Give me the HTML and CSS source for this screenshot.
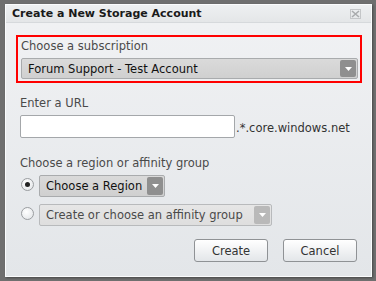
FILE: index.html
```html
<!DOCTYPE html>
<html lang="en">
<head>
  <meta charset="UTF-8" />
  <title>Create a New Storage Account</title>
  <link rel="stylesheet" href="styles.css">
</head>
<body>
  <div class="dialog">
    <div class="titlebar">
      <span class="title">Create a New Storage Account</span>
      <svg class="close" width="11" height="10" viewBox="0 0 11 10">
        <rect x="0.5" y="0.5" width="10" height="9" fill="none" stroke="#c4c6c8"/>
        <path d="M2 2 L9 8 M9 2 L2 8" stroke="#a9abad" stroke-width="1.6"/>
      </svg>
    </div>

    <div class="content">
      <section class="highlight">
        <div class="label">Choose a subscription</div>
        <div class="select wide">
          <span class="select-text">Forum Support - Test Account</span>
          <span class="arrow"><svg width="7" height="4" viewBox="0 0 7 4"><path d="M0 0 H7 L3.5 4 Z" fill="#fff"/></svg></span>
        </div>
      </section>

      <section class="field">
        <div class="label">Enter a URL</div>
        <div class="url-row">
          <input type="text" class="input" />
          <span class="suffix">.*.core.windows.net</span>
        </div>
      </section>

      <section class="field region-field">
        <div class="label">Choose a region or affinity group</div>
        <div class="radio-row">
          <span class="radio checked"></span>
          <div class="select region">
            <span class="select-text">Choose a Region</span>
            <span class="arrow"><svg width="7" height="4" viewBox="0 0 7 4"><path d="M0 0 H7 L3.5 4 Z" fill="#fff"/></svg></span>
          </div>
        </div>
        <div class="radio-row">
          <span class="radio"></span>
          <div class="select affinity disabled">
            <span class="select-text">Create or choose an affinity group</span>
            <span class="arrow"><svg width="7" height="4" viewBox="0 0 7 4"><path d="M0 0 H7 L3.5 4 Z" fill="#fff"/></svg></span>
          </div>
        </div>
      </section>

      <div class="actions">
        <button class="btn">Create</button>
        <button class="btn">Cancel</button>
      </div>
    </div>
  </div>
</body>
</html>
```

FILE: styles.css
```css
* {
  box-sizing: border-box;
}

body {
  margin: 0;
  background: #6f6f6f;
  font-family: "DejaVu Sans", Verdana, sans-serif;
  height: 281px;
  overflow: hidden;
}

.dialog {
  margin: 4px 0 0 5px;
  width: 367px;
  height: 273px;
  border: 1px solid #fbfcfd;
  background: linear-gradient(#f1f2f4, #e3e6e9);
  box-shadow: 1px 1px 2px rgba(0, 0, 0, 0.35);
}

.titlebar {
  height: 18px;
  display: flex;
  align-items: center;
  justify-content: space-between;
  padding: 0 10px 0 6px;
  background: linear-gradient(#eef0f1, #e4e6e8);
  border-bottom: 1px solid #d6d9dc;
}

.title {
  font-weight: bold;
  font-size: 11px;
  color: #1a1a1a;
}

.close {
  display: block;
}

.content {
  padding: 12px 9px 0 10px;
}

.label {
  font-size: 11.5px;
  color: #4a4a4a;
  line-height: 14px;
}

.highlight {
  border: 2px solid #ff0000;
  padding: 2px 2px 2px 3px;
  height: 48px;
}

.select {
  display: flex;
  align-items: center;
  justify-content: space-between;
  height: 22px;
  border: 1px solid #a9abad;
  border-radius: 2px;
  background: linear-gradient(#dadada, #d0d0d0);
  padding: 0 1px 0 6px;
  font-size: 11.5px;
  color: #111;
}

.wide {
  margin-top: 5px;
  width: 337px;
  height: 21px;
}

.arrow {
  width: 16px;
  height: 18px;
  background: #8f8f8f;
  border-radius: 2px;
  display: flex;
  align-items: center;
  justify-content: center;
}

.wide .arrow {
  height: 17px;
}

.field {
  padding: 0 0 0 4px;
  margin-top: 13px;
}

.region-field {
  margin-top: 18px;
}

.url-row {
  display: flex;
  align-items: center;
  margin-top: 5px;
}

.input {
  width: 215px;
  height: 23px;
  border: 1px solid #a4a7aa;
  border-radius: 2px;
  background: #fff;
  margin: 0;
}

.suffix {
  font-size: 11.5px;
  color: #333;
  margin-left: 1px;
  margin-top: 2px;
}

.radio-row {
  display: flex;
  align-items: center;
  margin-top: 5px;
}

.radio-row + .radio-row {
  margin-top: 7px;
}

.radio {
  width: 13px;
  height: 13px;
  border-radius: 50%;
  border: 1px solid #9a9da0;
  background: radial-gradient(circle at 40% 35%, #ffffff, #dfe2e5);
  margin: -3px 5px 0 1px;
  position: relative;
}

.radio.checked::after {
  content: "";
  position: absolute;
  left: 3px;
  top: 3px;
  width: 5px;
  height: 5px;
  border-radius: 50%;
  background: #222;
}

.region {
  width: 126px;
}

.affinity {
  width: 233px;
}

.disabled {
  background: linear-gradient(#e6e6e6, #dedede);
  border-color: #b8babc;
  color: #4a4a4a;
}

.disabled .arrow {
  background: #b9b9b9;
}

.actions {
  display: flex;
  justify-content: flex-end;
  gap: 15px;
  margin-top: 13px;
  padding-right: 5px;
}

.btn {
  width: 74px;
  height: 23px;
  border: 1px solid #8f9295;
  border-radius: 3px;
  background: linear-gradient(#ffffff, #e3e6e9);
  font-family: "DejaVu Sans", Verdana, sans-serif;
  font-size: 11.5px;
  color: #333;
  padding: 0;
}
```
